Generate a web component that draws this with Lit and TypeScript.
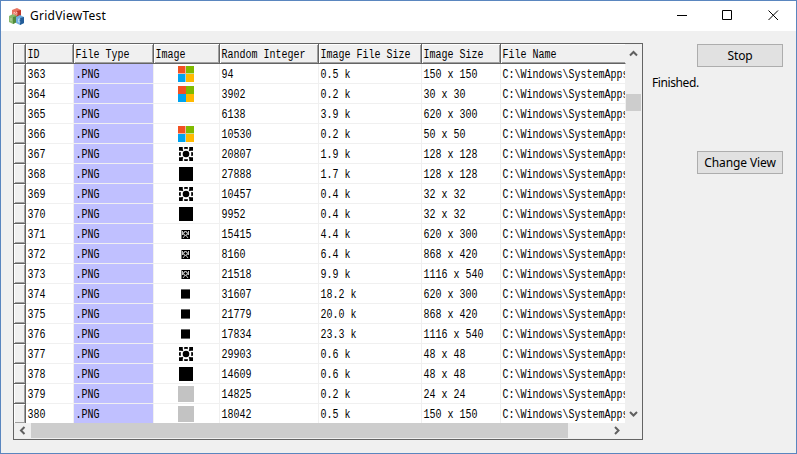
import { LitElement, html, svg, css } from "lit";
import { customElement } from "lit/decorators.js";

const rows: [number, string, number, string, string][] = [
  [363, "flag", 94, "0.5 k", "150 x 150"],
  [364, "flag2", 3902, "0.2 k", "30 x 30"],
  [365, "", 6138, "3.9 k", "620 x 300"],
  [366, "flag", 10530, "0.2 k", "50 x 50"],
  [367, "gear", 20807, "1.9 k", "128 x 128"],
  [368, "black", 27888, "1.7 k", "128 x 128"],
  [369, "gear", 10457, "0.4 k", "32 x 32"],
  [370, "black", 9952, "0.4 k", "32 x 32"],
  [371, "badge", 15415, "4.4 k", "620 x 300"],
  [372, "badge", 8160, "6.4 k", "868 x 420"],
  [373, "badge", 21518, "9.9 k", "1116 x 540"],
  [374, "small", 31607, "18.2 k", "620 x 300"],
  [375, "small", 21779, "20.0 k", "868 x 420"],
  [376, "small", 17834, "23.3 k", "1116 x 540"],
  [377, "gear", 29903, "0.6 k", "48 x 48"],
  [378, "black", 14609, "0.6 k", "48 x 48"],
  [379, "gray", 14825, "0.2 k", "24 x 24"],
  [380, "gray", 18042, "0.5 k", "150 x 150"],
];

const heads = ["ID", "File Type", "Image", "Random Integer", "Image File Size", "Image Size", "File Name"];

const flag = svg`<path fill="#f25022" d="M0 0h8v8H0z"/><path fill="#7fba00" d="M8 0h8v8H8z"/><path fill="#00a4ef" d="M0 8h8v8H0z"/><path fill="#ffb900" d="M8 8h8v8H8z"/>`;

const art: Record<string, unknown> = {
  flag: svg`${flag}<path fill="#fff" fill-opacity=".55" d="M7 0h1v16H7zM0 7h16v1H0z"/>`,
  flag2: flag,
  gear: svg`<path d="M1 1h14v14H1z"/><circle cx="8" cy="8" r="5.300" fill="#fff"/><path stroke="#fff" stroke-width="1.500" d="M5.500 1v3M10.500 1v3M5.500 12v3M10.500 12v3M1 5.500h3M1 10.500h3M12 5.500h3M12 10.500h3"/><circle cx="8" cy="8" r="3.300"/><path stroke="#000" stroke-width="1.500" d="M3.500 3.500l1.300 1.300M12.500 3.500l-1.300 1.300M3.500 12.500l1.300-1.300M12.500 12.500l-1.300-1.300"/>`,
  black: svg`<path d="M1 1h14v14H1z"/>`,
  badge: svg`<path fill="#777" d="M3 4h9v9H3z"/><path d="M4 4h8v9H4z"/><circle cx="7.500" cy="7.500" r="1.900" fill="none" stroke="#fff"/><path fill="none" stroke="#fff" stroke-width=".9" stroke-opacity=".85" d="M4.500 5v4M10.500 5v4M5 12l1.500-2M10 12l-1.500-2"/>`,
  small: svg`<path fill="#666" d="M3 3h9v10H3z"/><path d="M3 4h9v8H3z"/>`,
  gray: svg`<path fill="#c3c3c3" d="M0 0h16v16H0z"/>`,
};

const chevron = (d: string) => html`<svg class="chev" viewBox="0 0 16 16"><path fill="none" stroke="#606060" stroke-width="2" d=${d} /></svg>`;

@customElement("app-root")
export class AppRoot extends LitElement {
  static styles = css`
    :host { display: block; }
    * { box-sizing: border-box; }
    svg { display: block; flex: none; }
    .window { width: 797px; height: 454px; border: 1px solid #5a86bf; background: #f0f0f0; display: flex; flex-direction: column; font-family: "Noto Sans", sans-serif; color: #000; overflow: hidden; }
    .title { height: 30px; flex: none; background: #fff; display: flex; align-items: center; padding-left: 8px; }
    .name { font-size: 12px; letter-spacing: .25px; margin-left: 5px; flex: 1; line-height: 30px; }
    .content { flex: 1; display: flex; padding: 12px 13px 14px 12px; }
    .grid { width: 630px; height: 397px; border: 1px solid #646464; display: grid; grid-template-columns: 612px 16px; grid-template-rows: 379px 16px; background: #f0f0f0; }
    .view { overflow: hidden; background: #fff; }
    .row { display: grid; grid-template-columns: 12px 48px 80px 66px 99px 103px 79px 125px; height: 20px; }
    .cell { border-right: 1px solid #f0f0f0; border-bottom: 1px solid #f0f0f0; padding-left: 1.5px; overflow: hidden; display: flex; align-items: center; }
    .fixed { background: #f0f0f0; border-right: 1px solid #646464; border-bottom: 1px solid #646464; box-shadow: inset 1px 1px #fff, inset -1px -1px #a0a0a0; }
    .fixed:last-child { border-right-color: #f0f0f0; box-shadow: inset 1px 1px #fff, inset 0 -1px #a0a0a0; }
    .type { background: #c0c0ff; }
    .pic { padding: 0 0 0 24px; }
    .txt { font: 10px/17px "Liberation Mono", monospace; white-space: pre; padding-top: 2px; transform: scaleY(1.2); }
    .fixed .txt { padding-top: 3px; line-height: 16px; }
    .vbar { display: flex; flex-direction: column; justify-content: space-between; position: relative; }
    .hbar { display: flex; justify-content: space-between; position: relative; }
    .vthumb { position: absolute; left: 0; top: 50px; width: 15px; height: 17px; background: #cdcdcd; }
    .hthumb { position: absolute; left: 17px; top: 0; width: 537px; height: 15px; background: #cdcdcd; }
    .chev { width: 16px; height: 16px; }
    .side { flex: 1; display: flex; flex-direction: column; padding: 1px 0 0 9px; font-size: 12px; letter-spacing: -.1px; }
    .btn { align-self: flex-end; width: 86px; height: 23px; border: 1px solid #adadad; background: #e1e1e1; font: 12px "Noto Sans", sans-serif; letter-spacing: -.1px; padding: 0; color: #000; white-space: nowrap; }
    .status { height: 16px; line-height: 16px; margin: 8px 0 60px; letter-spacing: -.4px; }
  `;

  render() {
    return html`
      <div class="window">
        <div class="title">
          <svg width="16" height="17" viewBox="0 0 16 17">
            <path fill="#e87461" d="M3 2l5-2 4 2v6l-4 2-5-2z"/><path fill="#c0392b" d="M8 3l4-1v6l-4 2z"/>
            <path fill="#86b86b" d="M0 8l4-2 4 2v6l-4 2-4-2z"/><path fill="#4f8a3c" d="M4 9l4-1v6l-4 2z"/>
            <path fill="#71aee0" d="M7 9l4-2 4 2v6l-4 2-4-2z"/><path fill="#235d99" d="M11 10l4-1v6l-4 2z"/>
            <path fill="none" stroke="#fff" stroke-opacity=".45" d="M5 7V4l1.500 1.500L8 4v3M2 13v-3M11.500 11h-2v3h2"/>
          </svg>
          <span class="name">GridViewTest</span>
          <svg width="120" height="30" viewBox="0 0 120 30" fill="none" stroke="#000">
            <path d="M1 14.500h10M46.500 9.500h9v9h-9z"/><path d="M92.500 9.500l9.500 9.500M102 9.500l-9.500 9.500"/>
          </svg>
        </div>
        <div class="content">
          <div class="grid">
            <div class="view">
              <div class="row"><div class="cell fixed"></div>${heads.map((h) => html`<div class="cell fixed"><span class="txt">${h}</span></div>`)}</div>
              ${rows.map(([id, pic, rnd, size, dim]) => html`
                <div class="row">
                  <div class="cell fixed"></div>
                  <div class="cell"><span class="txt">${id}</span></div>
                  <div class="cell type"><span class="txt">.PNG</span></div>
                  <div class="cell pic"><svg width="16" height="16" viewBox="0 0 16 16">${pic ? art[pic] : ""}</svg></div>
                  <div class="cell"><span class="txt">${rnd}</span></div>
                  <div class="cell"><span class="txt">${size}</span></div>
                  <div class="cell"><span class="txt">${dim}</span></div>
                  <div class="cell"><span class="txt">C:\\Windows\\SystemApps</span></div>
                </div>`)}
            </div>
            <div class="vbar">${chevron("M4 11.500l3.500-3.500 3.500 3.500")}<div class="vthumb"></div>${chevron("M4 5l3.500 3.500L11 5")}</div>
            <div class="hbar">${chevron("M10.500 4L7 7.500l3.500 3.500")}<div class="hthumb"></div>${chevron("M5 4l3.500 3.500L5 11")}</div>
          </div>
          <div class="side">
            <button class="btn">Stop</button>
            <div class="status">Finished.</div>
            <button class="btn">Change View</button>
          </div>
        </div>
      </div>`;
  }
}
